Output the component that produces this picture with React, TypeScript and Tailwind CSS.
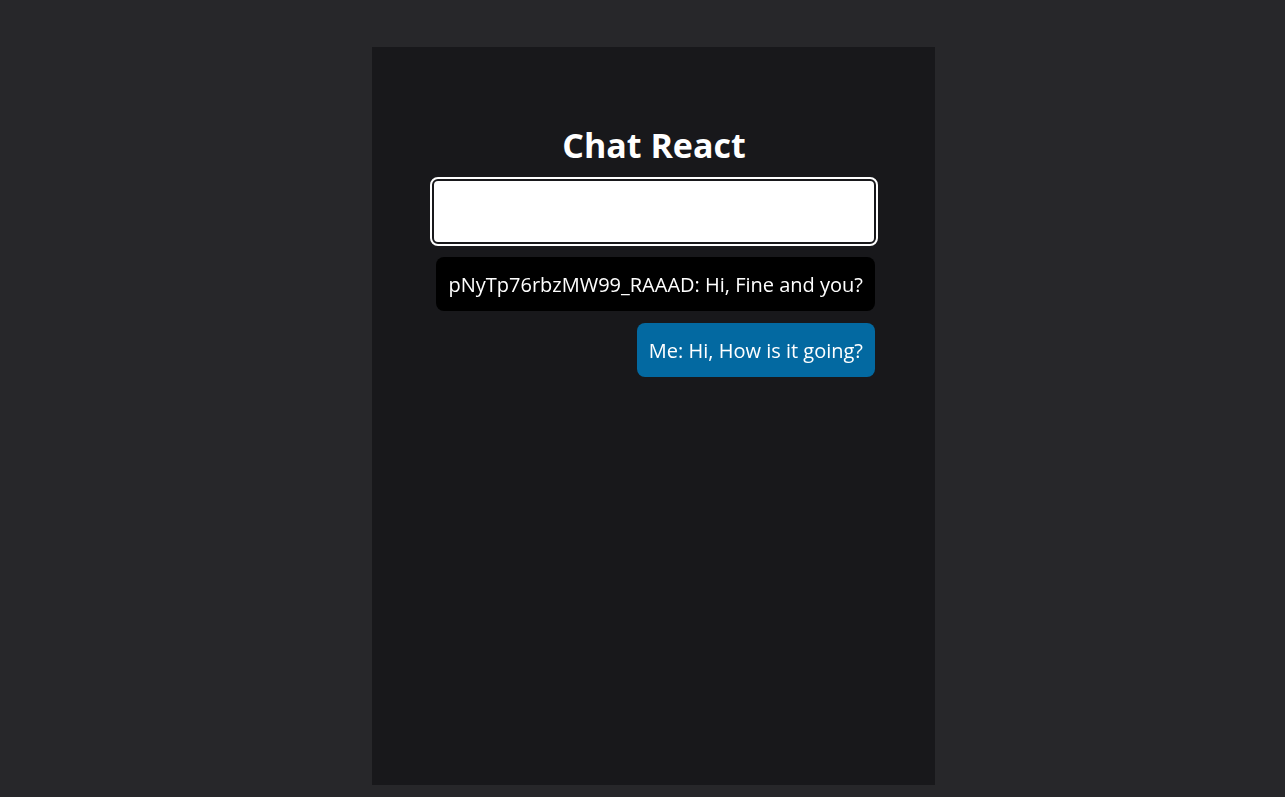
import { useState } from "react";

const messages = [
  { id: 1, mine: false, text: "pNyTp76rbzMW99_RAAAD: Hi, Fine and you?" },
  { id: 2, mine: true, text: "Me: Hi, How is it going?" },
];

export default function App() {
  const [value, setValue] = useState("");

  return (
    <div
      className="flex min-h-screen justify-center bg-[#27272a] pl-[22px] pt-[47px]"
      style={{ fontFamily: '"Open Sans", "Noto Sans", sans-serif' }}
    >
      <div className="flex h-[738px] w-[563px] flex-col items-center bg-[#18181b] pl-[60px] pr-[59px] pt-[78px]">
        <h1 className="text-[34px] font-bold leading-[40px] text-white">Chat React</h1>
        <input
          autoFocus
          value={value}
          onChange={(e) => setValue(e.target.value)}
          className="mt-[14px] h-[65px] w-full rounded-md border-2 border-[#18181b] bg-white px-3 text-2xl text-black caret-black outline-2 outline-white"
        />
        <div className="mt-[13px] flex w-full flex-col items-end gap-3 pr-px">
          {messages.map((m) => (
            <div
              key={m.id}
              className={
                m.mine
                  ? "rounded-lg bg-[#0369a1] px-3 pb-[11px] pt-[13px] text-xl leading-[30px] text-white"
                  : "rounded-lg bg-black px-3 pb-[11px] pt-[13px] text-xl leading-[30px] text-white"
              }
            >
              {m.text}
            </div>
          ))}
        </div>
      </div>
    </div>
  );
}
